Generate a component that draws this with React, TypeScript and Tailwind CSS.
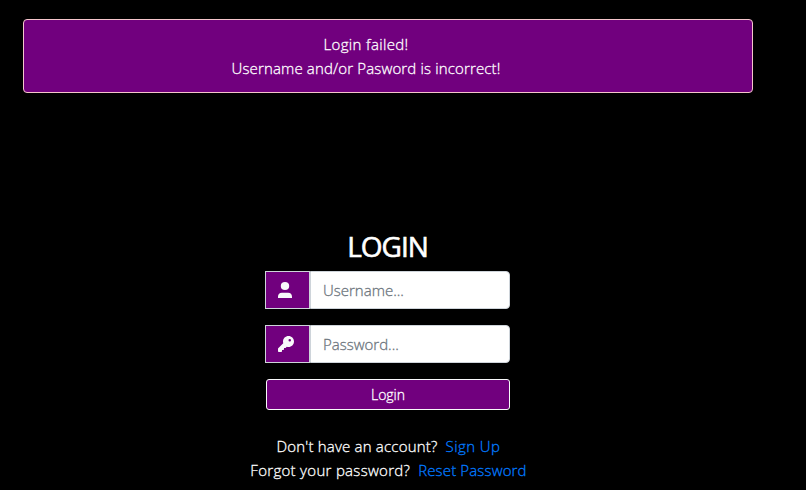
import { ReactNode } from "react";
import { FaKey } from "react-icons/fa6";

function UserIcon() {
  return (
    <svg width="14" height="16" viewBox="0 0 14 16" fill="currentColor">
      <ellipse cx="7" cy="4" rx="4.2" ry="4" />
      <path d="M0 16v-1.5C0 12.2 1.6 10.8 3.8 10.8h6.4c2.2 0 3.8 1.4 3.8 3.7V16z" />
    </svg>
  );
}

function Field({ icon, label, type }: { icon: ReactNode; label: string; type: string }) {
  return (
    <div className="mb-4 flex h-[38px] w-[245px]">
      <span className="flex w-[45px] items-center border border-[#ced4da] bg-[#71007e] pl-3 text-base text-[#f8f9fa]">
        {icon}
      </span>
      <input
        type={type}
        placeholder={label}
        className="w-[200px] rounded-r border border-[#ced4da] bg-white px-3 text-[15px] placeholder:text-[#6c757d] placeholder:opacity-100"
      />
    </div>
  );
}

export default function App() {
  return (
    <main className="h-[490px] w-full overflow-hidden bg-black pl-[23px] pt-[19px] font-['Open_Sans',sans-serif] text-[15px] font-light leading-6 text-white [-webkit-text-stroke:0.3px_currentColor]">
      <div className="h-[74px] w-[730px] rounded border border-[#f5c6cb] bg-[#71007e] pl-[19px] pr-[63px] pt-3 text-center">
        <p className="tracking-[0.35px]">Login failed!</p>
        <p className="tracking-[0.15px]">Username and/or Pasword is incorrect!</p>
      </div>
      <section className="flex w-[729px] flex-col items-center pt-[136px]">
        <h1 className="mb-2 h-[34px] text-[28px] font-medium leading-[34px] tracking-[-1px] [-webkit-text-stroke:0.6px_currentColor]">LOGIN</h1>
        <form className="flex w-[245px] flex-col items-end">
          <Field icon={<UserIcon />} label="Username..." type="text" />
          <Field icon={<FaKey />} label="Password..." type="password" />
          <button type="button" className="h-[31px] w-[244px] rounded-[3px] border border-[#f8f9fa] bg-[#71007e] text-sm">
            Login
          </button>
        </form>
        <div className="pl-[2px] pt-6 text-center">
          <p className="flex justify-center gap-2"><span className="tracking-[0.2px]">Don't have an account?</span><a href="#" className="tracking-[0.45px] text-[#007bff]">Sign Up</a></p>
          <p className="flex justify-center gap-2"><span className="tracking-[0.3px]">Forgot your password?</span><a href="#" className="tracking-[0.15px] text-[#007bff]">Reset Password</a></p>
        </div>
      </section>
    </main>
  );
}
